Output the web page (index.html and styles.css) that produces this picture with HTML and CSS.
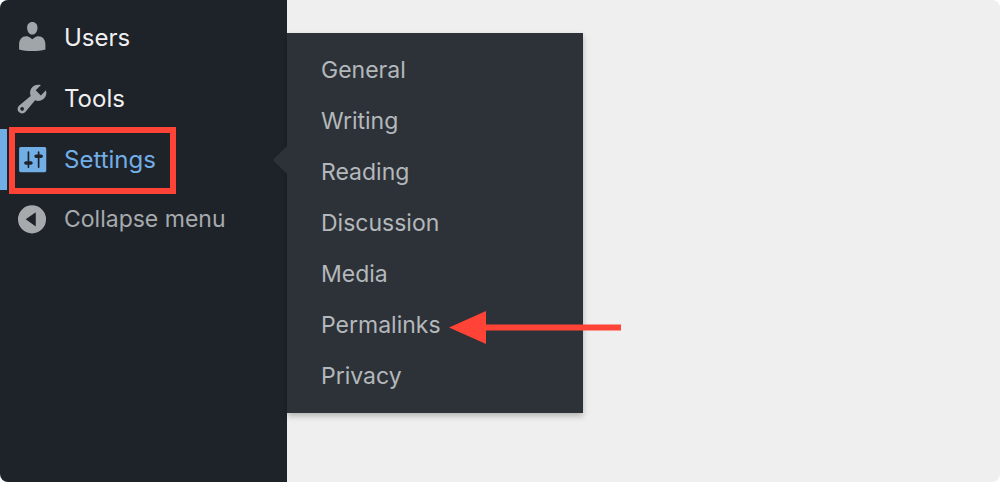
FILE: index.html
```html
<!DOCTYPE html>
<html lang="en">
<head>
  <meta charset="UTF-8">
  <meta name="viewport" content="width=device-width, initial-scale=1">
  <title>Settings menu</title>
  <link rel="stylesheet" href="styles.css">
</head>
<body>

<div class="admin">
  <nav class="sidebar">
    <ul class="menu">
      <li class="menu-item">
        <a class="menu-link" href="#users">
          <svg class="icon" viewBox="0 0 36 36" aria-hidden="true"><path d="M18.3 2c3.3 0 5.3 2.600 5.200 5.900-.1 3.500-2.300 6.700-5.200 6.700s-5.100-3.200-5.200-6.700c-.1-3.300 1.900-5.900 5.200-5.900zM12.300 16.300c1.500 0 2.600.6 3.600 1.300l2.400 1.600 2.400-1.600c1-.7 2.100-1.300 3.600-1.300 4.300 0 7.100 3.400 7.100 8v5.300c-3.900 1-8.300 1.500-13.100 1.500s-9.300-.5-13.200-1.500v-5.300c0-4.600 2.900-8 7.200-8z"/></svg>
          Users
        </a>
      </li>
      <li class="menu-item">
        <a class="menu-link" href="#tools">
          <svg class="icon" viewBox="0 0 20 20" aria-hidden="true"><path d="M16.68 9.77c-1.34 1.34-3.3 1.67-4.95.99l-5.41 6.52c-.99.99-2.59.99-3.58 0s-.99-2.59 0-3.57l6.52-5.42c-.68-1.65-.35-3.61.99-4.95 1.28-1.28 3.12-1.62 4.72-1.06l-2.89 2.89 2.82 2.82 2.86-2.87c.53 1.58.18 3.39-1.08 4.65zM3.81 16.21c.4.39 1.04.39 1.43 0 .4-.4.4-1.04 0-1.43-.39-.4-1.03-.4-1.43 0-.39.39-.39 1.03 0 1.43z"/></svg>
          Tools
        </a>
      </li>
      <li class="menu-item current">
        <a class="menu-link" href="#settings">
          <svg class="icon" viewBox="-1 -.4 21.2 21.2" aria-hidden="true"><path d="M18 16.400V3.600c0-.55-.45-1-1-1H3c-.55 0-1 .45-1 1v12.800c0 .55.45 1 1 1h14c.55 0 1-.45 1-1zM8 11h1c.55 0 1 .45 1 1s-.45 1-1 1H8v1.500c0 .28-.22.5-.5.5s-.5-.22-.5-.5V13H6c-.55 0-1-.45-1-1s.45-1 1-1h1V5.500c0-.28.22-.5.5-.5s.5.22.5.5V11zm5-2h-1c-.55 0-1-.45-1-1s.45-1 1-1h1V5.500c0-.28.22-.5.5-.5s.5.22.5.5V7h1c.55 0 1 .45 1 1s-.45 1-1 1h-1v5.500c0 .28-.22.5-.5.5s-.5-.22-.5-.5V9z"/></svg>
          Settings
        </a>
        <span class="highlight"></span>
        <ul class="submenu">
          <li><a href="#general">General</a></li>
          <li><a href="#writing">Writing</a></li>
          <li><a href="#reading">Reading</a></li>
          <li><a href="#discussion">Discussion</a></li>
          <li><a href="#media">Media</a></li>
          <li class="pointed">
            <a href="#permalinks">Permalinks</a>
            <svg class="arrow" viewBox="0 0 172 33" aria-hidden="true"><path d="M0 16.5L37 0v13.5h135v6H37V33z"/></svg>
          </li>
          <li><a href="#privacy">Privacy</a></li>
        </ul>
      </li>
    </ul>
    <button class="collapse" type="button">
      <svg class="icon" viewBox="0 0 20 20" aria-hidden="true"><path fill-rule="evenodd" d="M10 2.400a7.800 7.800 0 1 1 0 15.600 7.800 7.800 0 0 1 0-15.600zM12.100 6.200L6.500 10.200l5.600 4z"/></svg>
      Collapse menu
    </button>
  </nav>
  <main class="content"></main>
</div>

</body>
</html>
```
FILE: styles.css
```css
* { box-sizing: border-box; }
body {
  margin: 0;
  background: #fff;
  font-family: Inter, "Liberation Sans", sans-serif;
  font-size: 23px;
  line-height: 30px;
}
ul { list-style: none; margin: 0; padding: 0; }
a { color: inherit; text-decoration: none; }

.admin {
  display: flex;
  min-height: 100vh;
  background: #efefef;
  border-radius: 8px;
  overflow: hidden;
}
.sidebar {
  flex: 0 0 287px;
  padding-top: 7px;
  background: #1e2329;
}
.content { flex: 1; }

.menu { font-size: 24px; }
.menu-item { position: relative; }
.menu-link, .collapse {
  display: flex;
  align-items: center;
  gap: 14px;
  width: 100%;
  height: 61px;
  padding: 0 14px;
  color: #f0f0f1;
}
.icon {
  flex: none;
  width: 36px;
  height: 36px;
  fill: #a0a5aa;
}
.current .menu-link {
  color: #72aee6;
  box-shadow: inset 7px 0 #72aee6;
}
.current .icon { fill: #72aee6; }

/* notch pointing back at the open item */
.current::after {
  content: "";
  position: absolute;
  top: 17px;
  right: 0;
  border: 14px solid transparent;
  border-left-width: 0;
  border-right-color: #2d3238;
}
.highlight {
  position: absolute;
  top: -2px;
  left: 9px;
  width: 167px;
  height: 67px;
  border: 6px solid #ff4336;
  pointer-events: none;
}

.collapse {
  height: 58px;
  border: 0;
  background: none;
  color: #a7aaad;
  font: inherit;
  cursor: pointer;
}
.collapse .icon { fill: #a7aaad; }

.submenu {
  position: absolute;
  top: -96px;
  left: 100%;
  width: 296px;
  padding: 12px 0 11px;
  background: #2d3238;
  color: #b4b8bb;
  box-shadow: 0 3px 6px rgba(0, 0, 0, 0.25);
  font-size: 23px;
}
.submenu a {
  display: block;
  padding: 10px 34px 11px;
}
.submenu a:hover { color: #72aee6; }

.pointed { position: relative; }
.pointed .arrow {
  position: absolute;
  top: 11px;
  left: 162px;
  width: 172px;
  height: 33px;
  fill: #ff4336;
}
```
